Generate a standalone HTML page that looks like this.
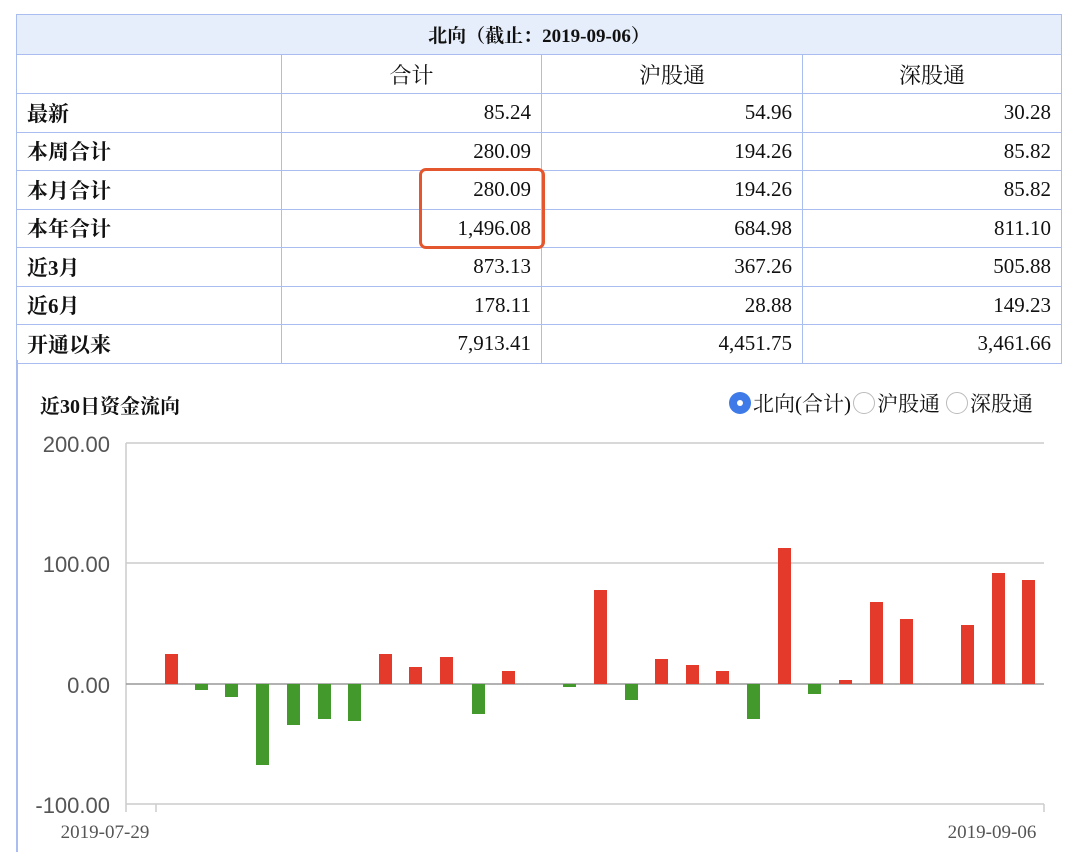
<!DOCTYPE html>
<html><head><meta charset="utf-8"><style>
*{margin:0;padding:0;box-sizing:border-box}
body{width:1080px;height:860px;background:#fff;position:relative;overflow:hidden;font-family:"Liberation Serif","Noto Serif CJK SC",serif;color:#111}
table{position:absolute;left:16px;top:14px;border-collapse:collapse;width:1046px;font-size:21px}
td{border:1.5px solid #a9bdf0;height:38.5px;padding:0 10px}
tr.h td{background:#e6eefb;text-align:center;font-weight:bold;font-size:19px;height:40px}
tr.c td{text-align:center;height:39px;font-size:22px}
td.n{text-align:right}
td.l{text-align:left;font-weight:bold}
.box{position:absolute;left:419px;top:168px;width:126px;height:81px;border:3px solid #e4572e;border-radius:7px}
.vl{position:absolute;left:16px;top:360px;width:1.5px;height:492px;background:#a9bdf0}
.tt{position:absolute;left:40px;top:390px;font-size:20px;font-weight:bold}
.lg{position:absolute;left:729px;top:388px;font-size:21px;display:flex;align-items:center;gap:2px}
.r{width:22px;height:22px;border-radius:50%;border:1px solid #bbb;display:inline-block;background:#fff}
.r.on{background:#3e7be8;border:none;position:relative}
.r.on:after{content:"";position:absolute;left:8px;top:8px;width:6px;height:6px;border-radius:50%;background:#fff}
svg{position:absolute;left:0;top:0}
</style></head><body>
<table>
<tr class="h"><td colspan="4">北向（截止：2019-09-06）</td></tr>
<tr class="c"><td style="width:265px"></td><td style="width:260px">合计</td><td style="width:261px">沪股通</td><td>深股通</td></tr>
<tr><td class="l">最新</td><td class="n">85.24</td><td class="n">54.96</td><td class="n">30.28</td></tr>
<tr><td class="l">本周合计</td><td class="n">280.09</td><td class="n">194.26</td><td class="n">85.82</td></tr>
<tr><td class="l">本月合计</td><td class="n">280.09</td><td class="n">194.26</td><td class="n">85.82</td></tr>
<tr><td class="l">本年合计</td><td class="n">1,496.08</td><td class="n">684.98</td><td class="n">811.10</td></tr>
<tr><td class="l">近3月</td><td class="n">873.13</td><td class="n">367.26</td><td class="n">505.88</td></tr>
<tr><td class="l">近6月</td><td class="n">178.11</td><td class="n">28.88</td><td class="n">149.23</td></tr>
<tr><td class="l">开通以来</td><td class="n">7,913.41</td><td class="n">4,451.75</td><td class="n">3,461.66</td></tr>
</table>
<div class="box"></div>
<div class="vl"></div>
<div class="tt">近30日资金流向</div>
<div class="lg"><span class="r on"></span>北向(合计)<span class="r"></span>沪股通<span class="r" style="margin-left:4px"></span>深股通</div>
<svg width="1080" height="860" xmlns="http://www.w3.org/2000/svg">
<g stroke="#ccc" stroke-width="1.5">
<line x1="126" y1="443" x2="1044" y2="443"/>
<line x1="126" y1="563" x2="1044" y2="563"/>
<line x1="126" y1="804" x2="1044" y2="804"/>
<line x1="126" y1="443" x2="126" y2="812"/>
<line x1="156" y1="804" x2="156" y2="812"/>
<line x1="1044" y1="804" x2="1044" y2="812"/>
</g>
<g font-family="Liberation Sans, sans-serif" font-size="22" fill="#555" text-anchor="end">
<text x="110" y="452">200.00</text><text x="110" y="572">100.00</text><text x="110" y="693">0.00</text><text x="110" y="813">-100.00</text>
</g>
<g font-family="Liberation Serif, serif" font-size="19" fill="#555" text-anchor="middle">
<text x="105" y="838">2019-07-29</text><text x="992" y="838">2019-09-06</text>
</g>
<line x1="126" y1="684" x2="1044" y2="684" stroke="#999" stroke-width="1.5"/>
<g>
<rect x="165" y="654" width="13" height="30" fill="#e43a2c"/>
<rect x="195" y="684" width="13" height="6" fill="#43992b"/>
<rect x="225" y="684" width="13" height="13" fill="#43992b"/>
<rect x="256" y="684" width="13" height="81" fill="#43992b"/>
<rect x="287" y="684" width="13" height="41" fill="#43992b"/>
<rect x="318" y="684" width="13" height="35" fill="#43992b"/>
<rect x="348" y="684" width="13" height="37" fill="#43992b"/>
<rect x="379" y="654" width="13" height="30" fill="#e43a2c"/>
<rect x="409" y="667" width="13" height="17" fill="#e43a2c"/>
<rect x="440" y="657" width="13" height="27" fill="#e43a2c"/>
<rect x="472" y="684" width="13" height="30" fill="#43992b"/>
<rect x="502" y="671" width="13" height="13" fill="#e43a2c"/>
<rect x="563" y="684" width="13" height="3" fill="#43992b"/>
<rect x="594" y="590" width="13" height="94" fill="#e43a2c"/>
<rect x="625" y="684" width="13" height="16" fill="#43992b"/>
<rect x="655" y="659" width="13" height="25" fill="#e43a2c"/>
<rect x="686" y="665" width="13" height="19" fill="#e43a2c"/>
<rect x="716" y="671" width="13" height="13" fill="#e43a2c"/>
<rect x="747" y="684" width="13" height="35" fill="#43992b"/>
<rect x="778" y="548" width="13" height="136" fill="#e43a2c"/>
<rect x="808" y="684" width="13" height="10" fill="#43992b"/>
<rect x="839" y="680" width="13" height="4" fill="#e43a2c"/>
<rect x="870" y="602" width="13" height="82" fill="#e43a2c"/>
<rect x="900" y="619" width="13" height="65" fill="#e43a2c"/>
<rect x="961" y="625" width="13" height="59" fill="#e43a2c"/>
<rect x="992" y="573" width="13" height="111" fill="#e43a2c"/>
<rect x="1022" y="580" width="13" height="104" fill="#e43a2c"/>
</g>
</svg>
</body></html>
